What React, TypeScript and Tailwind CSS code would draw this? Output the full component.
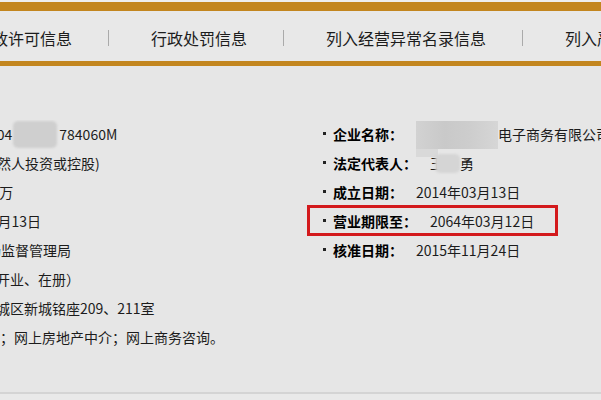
import React from "react";

const tabs = ["行政许可信息", "行政处罚信息", "列入经营异常名录信息", "列入严重违法失信企业名单信息"];

const leftRows: { text: string; offset: string }[] = [
  { text: "自然人投资或控股)", offset: "ml-[-17px]" },
  { text: "100万", offset: "ml-[-24px]" },
  { text: "03月13日", offset: "ml-[-18px]" },
  { text: "市场监督管理局", offset: "ml-[-27px]" },
  { text: "营、开业、在册）", offset: "ml-[-32px]" },
  { text: "东城区新城铭座209、211室", offset: "ml-[-18px]" },
  { text: "询；网上房地产中介；网上商务咨询。", offset: "ml-[-14px]" },
];

const Blur = ({ className }: { className: string }) => (
  <span className={`inline-block shrink-0 align-middle rounded-[5px] blur-[1px] ${className}`} />
);

const InfoRow = ({ label, children }: { label: string; children: React.ReactNode }) => (
  <div className="flex items-center h-[29px] whitespace-nowrap">
    <span className="shrink-0 w-[3px] h-[3px] bg-[#222] mr-[7px] mt-[-3px]" />
    <span className="shrink-0 font-bold text-black">{label}</span>
    <span className="shrink-0 ml-[13px] flex items-center">{children}</span>
  </div>
);

export default function App() {
  return (
    <div
      className="w-[601px] h-[400px] overflow-hidden bg-[#e6e6e6] text-[#1c1c1c] flex flex-col"
      style={{ fontFamily: '"Noto Sans CJK SC", "Liberation Sans", sans-serif' }}
    >
      <div className="h-[2px] bg-[#eeeeee]" />
      <div className="h-[9px] bg-[#c3861f]" />

      {/* Tabs */}
      <div className="h-[50px] bg-[#e8e8e8] flex items-center pt-[3px] text-[16px] whitespace-nowrap">
        <div className="flex items-center ml-[-24px]">
          {tabs.map((t, i) => (
            <React.Fragment key={t}>
              <span>{t}</span>
              {i < tabs.length - 1 && <span className="ml-[36px] mr-[42px] w-px h-[16px] bg-[#aaaaaa]" />}
            </React.Fragment>
          ))}
        </div>
      </div>
      <div className="h-[5px] bg-[#c3861f]" />

      {/* Content */}
      <div className="relative h-[326px] flex pt-[54px] text-[14px]">
        <div className="w-[300px] shrink-0 overflow-hidden whitespace-nowrap">
          <div className="flex items-center h-[29px]">
            <span className="ml-[-11px]">104</span>
            <Blur className="ml-[1px] w-[44px] h-[27px] bg-[#cfcfcf]" />
            <span className="ml-[2px]">784060M</span>
          </div>
          {leftRows.map((r) => (
            <div key={r.text} className="flex items-center h-[29px]">
              <span className={r.offset}>{r.text}</span>
            </div>
          ))}
        </div>

        <div className="pl-[23px] flex-1 overflow-hidden">
          <InfoRow label="企业名称：">
            <span className="relative inline-block shrink-0 w-[82px] h-[28px] bg-[linear-gradient(90deg,#d2d2d2,#c9c9c9_35%,#cdcdcd_65%,#d6d6d6)]">
              <span className="absolute left-0 top-full w-[22px] h-[8px] bg-[#d9d9d9]" />
            </span>
            <span>电子商务有限公司</span>
          </InfoRow>
          <InfoRow label="法定代表人：">
            <span>王</span>
            <Blur className="ml-[-9px] w-[25px] h-[19px] bg-[#d5d5d5]" />
            <span>勇</span>
          </InfoRow>
          <InfoRow label="成立日期：">2014年03月13日</InfoRow>
          <InfoRow label="营业期限至：">2064年03月12日</InfoRow>
          <InfoRow label="核准日期：">2015年11月24日</InfoRow>
        </div>

        {/* annotation box */}
        <div className="absolute left-[307px] top-[139px] w-[251px] h-[31px] border-[3px] border-[#d3191c]" />
      </div>

      <div className="h-[2px] bg-[#d4d4d4]" />
      <div className="flex-1 bg-[#e9e9e9]" />
    </div>
  );
}
